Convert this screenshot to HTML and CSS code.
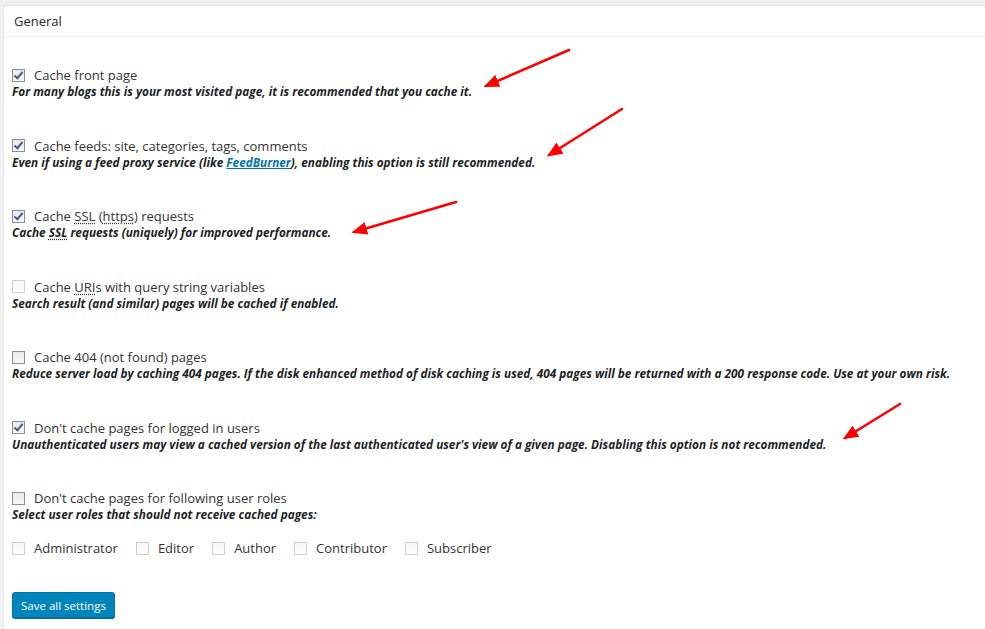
FILE: index.html
```html
<!DOCTYPE html>
<html>
<head>
    <link rel="stylesheet" href="styles.css">
</head>
<body>
    <div class="postbox">
        <!-- Box title -->
        <h3 class="postbox-title">General</h3>

        <div class="postbox-inside">
            <div class="option">
                <label class="option-label"><input type="checkbox" checked><span>Cache front page</span></label>
                <p class="description">For many blogs this is your most visited page, it is recommended that you cache it.</p>
            </div>

            <div class="option">
                <label class="option-label"><input type="checkbox" checked><span>Cache feeds: site, categories, tags, comments</span></label>
                <p class="description">Even if using a feed proxy service (like <a href="#">FeedBurner</a>), enabling this option is still recommended.</p>
            </div>

            <div class="option">
                <label class="option-label"><input type="checkbox" checked><span>Cache <abbr>SSL</abbr> (<abbr>https</abbr>) requests</span></label>
                <p class="description">Cache <abbr>SSL</abbr> requests (uniquely) for improved performance.</p>
            </div>

            <div class="option">
                <label class="option-label"><input type="checkbox" disabled><span>Cache <abbr>URI</abbr>s with query string variables</span></label>
                <p class="description">Search result (and similar) pages will be cached if enabled.</p>
            </div>

            <div class="option">
                <label class="option-label"><input type="checkbox"><span>Cache 404 (not found) pages</span></label>
                <p class="description">Reduce server load by caching 404 pages. If the disk enhanced method of disk caching is used, 404 pages will be returned with a 200 response code. Use at your own risk.</p>
            </div>

            <div class="option">
                <label class="option-label"><input type="checkbox" checked><span>Don't cache pages for logged in users</span></label>
                <p class="description">Unauthenticated users may view a cached version of the last authenticated user's view of a given page. Disabling this option is not recommended.</p>
            </div>

            <div class="option option-last">
                <label class="option-label"><input type="checkbox"><span>Don't cache pages for following user roles</span></label>
                <p class="description">Select user roles that should not receive cached pages:</p>
            </div>

            <!-- Role list -->
            <div class="roles">
                <label class="role"><input type="checkbox" class="soft"><span>Administrator</span></label>
                <label class="role"><input type="checkbox" class="soft"><span>Editor</span></label>
                <label class="role"><input type="checkbox" class="soft"><span>Author</span></label>
                <label class="role"><input type="checkbox" class="soft"><span>Contributor</span></label>
                <label class="role"><input type="checkbox" class="soft"><span>Subscriber</span></label>
            </div>

            <button class="button-primary">Save all settings</button>
        </div>
    </div>

    <!-- Annotation arrows -->
    <svg class="arrows" width="985" height="629" viewBox="0 0 985 629">
        <defs>
            <marker id="head" markerWidth="6" markerHeight="5" refX="5" refY="2.5" orient="auto" markerUnits="strokeWidth">
                <path d="M0,0 L6,2.5 L0,5 Z" fill="#f00"/>
            </marker>
        </defs>
        <g stroke="#f00" stroke-width="2.6" stroke-linecap="round" marker-end="url(#head)">
            <line x1="569" y1="50" x2="486" y2="86"/>
            <line x1="622" y1="109" x2="549" y2="155"/>
            <line x1="456" y1="202" x2="354" y2="232"/>
            <line x1="900" y1="404" x2="845" y2="438"/>
        </g>
    </svg>
</body>
</html>
```

FILE: styles.css
```css
/* Page */
body {
    margin: 0;
    background: #f1f1f1;
    font-family: "Open Sans", "Noto Sans", sans-serif;
    font-size: 13px;
    color: #222;
    overflow: hidden;
}

/* Settings box */
.postbox {
    margin: 5px -20px 0 3px;
    background: #fff;
    border: 1px solid #e5e5e5;
    min-height: 640px;
}

.postbox-title {
    margin: 0;
    height: 30px;
    line-height: 30px;
    padding: 0 10px;
    font-size: 13px;
    font-weight: normal;
    color: #23282d;
    border-bottom: 1px solid #eee;
}

.postbox-inside {
    padding: 28px 8px 0;
}

/* Option rows */
.option {
    height: 70.5px;
}

.option-label {
    display: flex;
    align-items: center;
    height: 20px;
    font-size: 13px;
    color: #333;
}

.description {
    margin: 0;
    line-height: 13px;
    font-size: 11.8px;
    font-weight: bold;
    font-style: italic;
    color: #1d1f26;
    white-space: nowrap;
}

.description a {
    color: #0073aa;
}

abbr {
    text-decoration: underline dotted;
    text-underline-offset: 2px;
}

/* Checkboxes */
input[type="checkbox"] {
    appearance: none;
    -webkit-appearance: none;
    position: relative;
    width: 13px;
    height: 13px;
    margin: 0 9px 0 0;
    border: 1px solid #8f8f8f;
    background: linear-gradient(#e9e9e9, #f7f7f7);
    box-sizing: border-box;
    flex: none;
}

input[type="checkbox"]:checked::before {
    content: "";
    position: absolute;
    left: 3px;
    top: 0;
    width: 3px;
    height: 7px;
    border: solid #48598e;
    border-width: 0 2px 2px 0;
    transform: rotate(40deg);
}

input[type="checkbox"]:disabled,
input[type="checkbox"].soft {
    border-color: #d0d0d0;
    background: linear-gradient(#f6f6f6, #fff);
}

/* Role checkboxes */
.option-last {
    height: 50px;
}

.roles {
    display: flex;
    gap: 18px;
    height: 20px;
    align-items: center;
}

.role {
    display: flex;
    align-items: center;
    font-size: 13px;
    color: #333;
}

.button-primary {
    display: block;
    margin: 34px 0 0;
    height: 26px;
    padding: 0 8px;
    background: #0085ba;
    border: 1px solid #0073aa;
    border-radius: 3px;
    box-shadow: 0 1px 0 #006799;
    color: #fff;
    font-family: inherit;
    font-size: 11.5px;
}

/* Overlay */
.arrows {
    position: absolute;
    left: 0;
    top: 0;
    pointer-events: none;
}
```
